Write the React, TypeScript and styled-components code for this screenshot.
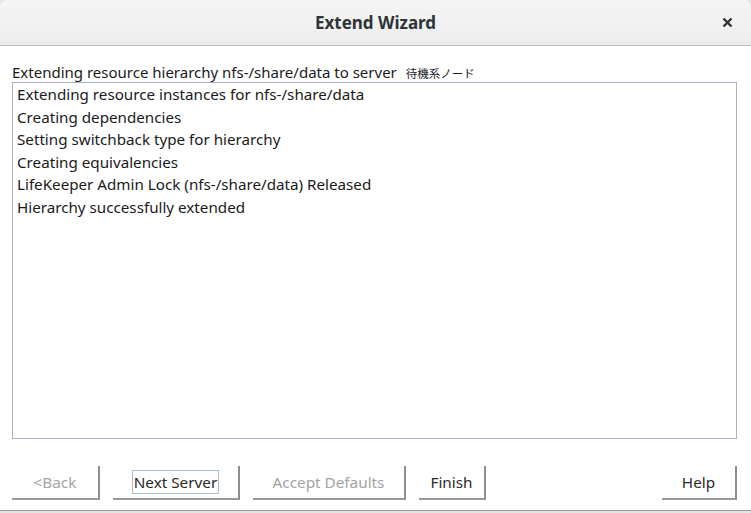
import React from "react";
import styled, { createGlobalStyle } from "styled-components";

const Global = createGlobalStyle`
  html, body { margin: 0; padding: 0; }
  body {
    background: #e4e6e3;
    font-family: "Noto Sans", "Noto Sans CJK JP", sans-serif;
    width: 751px;
    height: 513px;
    overflow: hidden;
  }
`;

const Window = styled.div`
  width: 751px;
  height: 511px;
  background: #ffffff;
  border-radius: 8px 8px 0 0;
  border-bottom: 1px solid #9c9c9c;
  display: flex;
  flex-direction: column;
  overflow: hidden;
  box-sizing: border-box;
`;

const TitleBar = styled.div`
  height: 45px;
  flex: none;
  background: linear-gradient(#f5f5f5, #ededed);
  border-bottom: 1px solid #bdbdbd;
  display: grid;
  grid-template-columns: 1fr auto 1fr;
  align-items: center;
  padding: 0 14px;
  box-sizing: content-box;
  border-radius: 8px 8px 0 0;
`;

const Title = styled.div`
  grid-column: 2;
  font-size: 17px;
  font-weight: 700;
  color: #2e3436;
`;

const Close = styled.div`
  grid-column: 3;
  justify-self: end;
  display: flex;
  align-items: center;
  margin-right: 4px;
`;

const Body = styled.div`
  flex: 1;
  display: flex;
  flex-direction: column;
  padding: 16px 14px 0 12px;
`;

const Label = styled.div`
  font-size: 15px;
  line-height: 20px;
  height: 20px;
  color: #1a1a1a;
  white-space: nowrap;
`;

const Jp = styled.span`
  font-family: "Noto Sans CJK JP", sans-serif;
  font-size: 11.5px;
  margin-left: 9px;
`;

const LogBox = styled.div`
  height: 357px;
  box-sizing: border-box;
  border: 1px solid #a8b4c6;
  padding: 0 4px;
  display: flex;
  flex-direction: column;
`;

const LogLine = styled.div`
  font-size: 15.2px;
  line-height: 22.6px;
  color: #1a1a1a;
  white-space: nowrap;
`;

const ButtonRow = styled.div`
  display: flex;
  gap: 13px;
  margin-top: 27px;
`;

const Button = styled.div<{ $w: number; $disabled?: boolean }>`
  width: ${(p) => p.$w}px;
  height: 34px;
  box-sizing: border-box;
  border-right: 2px solid #8e8e8e;
  border-bottom: 2px solid #9a9a9a;
  display: flex;
  align-items: center;
  justify-content: center;
  font-size: 15.3px;
  color: ${(p) => (p.$disabled ? "#a3a3a3" : "#2a2a2a")};
  background: #ffffff;
`;

const Focus = styled.span`
  outline: 1px solid #a9bcd8;
  padding: 1px 1px;
  line-height: 20px;
`;

const Spacer = styled.div`
  flex: 1;
`;

const lines = [
  "Extending resource instances for nfs-/share/data",
  "Creating dependencies",
  "Setting switchback type for hierarchy",
  "Creating equivalencies",
  "LifeKeeper Admin Lock (nfs-/share/data) Released",
  "Hierarchy successfully extended",
];

export default function App() {
  return (
    <>
      <Global />
      <Window>
        <TitleBar>
          <Title>Extend Wizard</Title>
          <Close>
            <svg width="11" height="11" viewBox="0 0 11 11">
              <path
                d="M1.5 1.5 L9.5 9.5 M9.5 1.5 L1.5 9.5"
                stroke="#2e3436"
                strokeWidth="2.4"
                strokeLinecap="butt"
              />
            </svg>
          </Close>
        </TitleBar>
        <Body>
          <Label>
            Extending resource hierarchy nfs-/share/data to server
            <Jp>待機系ノード</Jp>
          </Label>
          <LogBox>
            {lines.map((l) => (
              <LogLine key={l}>{l}</LogLine>
            ))}
          </LogBox>
          <ButtonRow>
            <Button $w={88} $disabled>
              &lt;Back
            </Button>
            <Button $w={127}>
              <Focus>Next Server</Focus>
            </Button>
            <Button $w={153} $disabled>
              Accept Defaults
            </Button>
            <Button $w={67}>Finish</Button>
            <Spacer />
            <Button $w={75}>Help</Button>
          </ButtonRow>
        </Body>
      </Window>
    </>
  );
}
